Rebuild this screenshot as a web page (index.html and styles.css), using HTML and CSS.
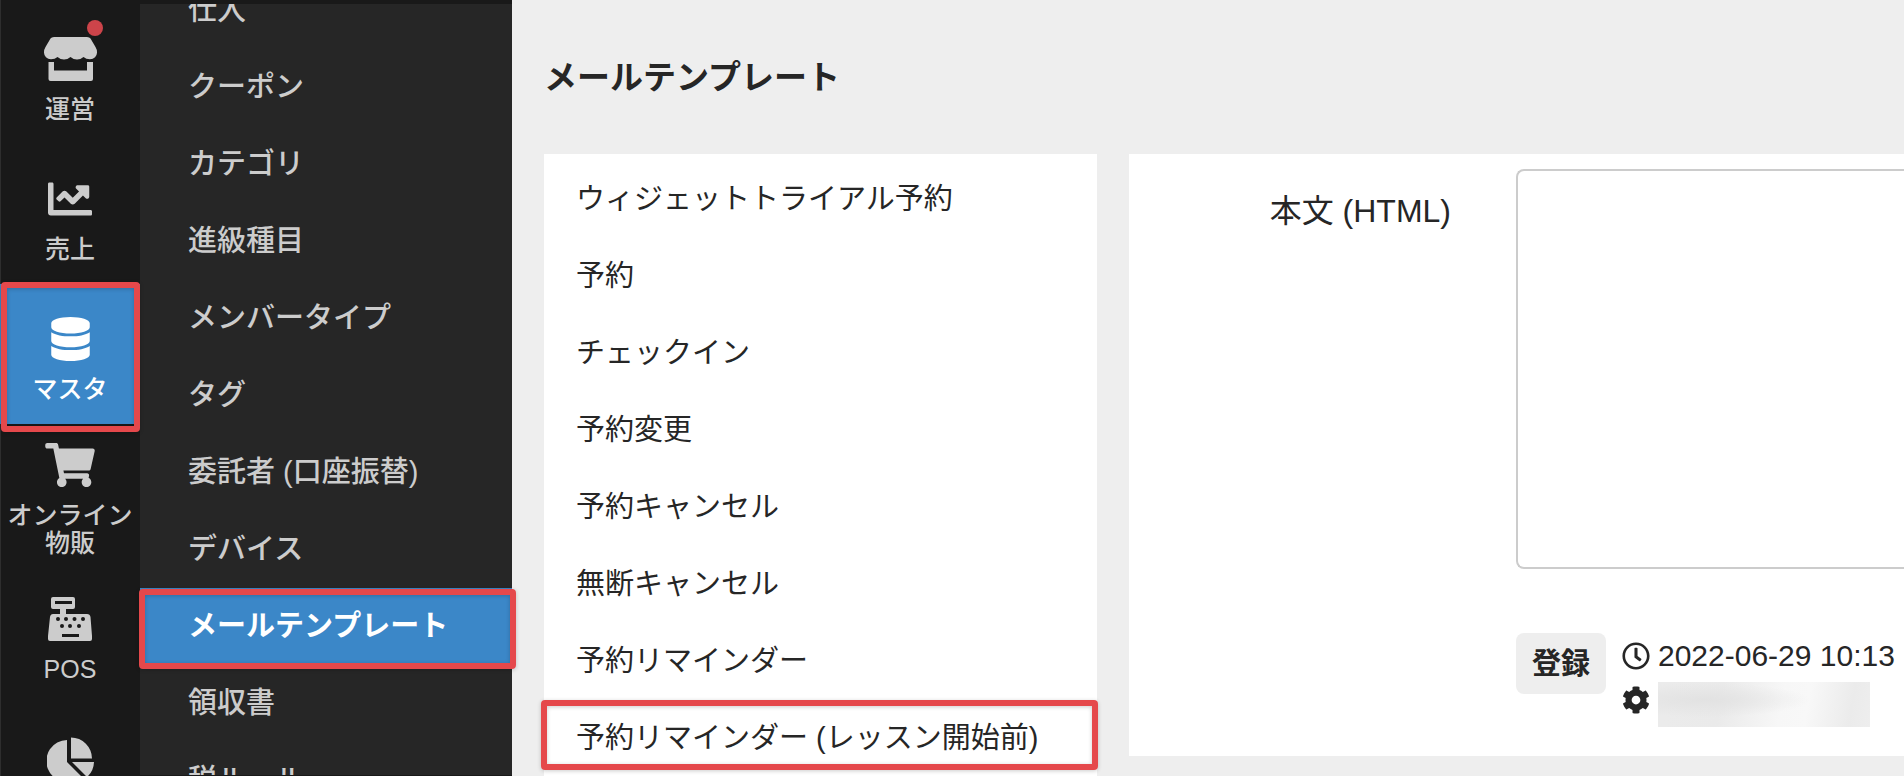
FILE: index.html
```html
<!DOCTYPE html>
<html lang="ja">
<head>
    <meta charset="UTF-8">
    <meta name="viewport" content="width=device-width, initial-scale=1.0">
    <title>メールテンプレート</title>
    <link rel="stylesheet" href="styles.css">
</head>
<body>
    <nav class="rail">
        <a href="#" class="rail-item">
            <span class="rail-icon">
                <svg width="53" height="44" viewBox="0 0 53 44"><path d="M10 0Q7.500 0 6.500 1.500L1.500 10Q0 12.500 0 15A7 7 0 0 0 7 22.300Q11 22.300 13.500 20Q16.500 22.500 20 22.500Q23.500 22.500 26.500 20Q29.500 22.500 33 22.500Q36.500 22.500 39.500 20Q42 22.300 46 22.300A7 7 0 0 0 53 15Q53 12.500 51.500 10L46.500 1.500Q45.500 0 43 0ZM4.500 25h5.500v8.500h33v-8.500h6v17q0 2-2 2h-40.500q-2 0-2-2z"/></svg>
                <span class="badge"></span>
            </span>
            <span>運営</span>
        </a>
        <a href="#" class="rail-item">
            <svg width="44" height="44" viewBox="0 0 512 512"><path d="M496 384H64V80c0-8.840-7.160-16-16-16H16C7.160 64 0 71.160 0 80v336c0 17.670 14.330 32 32 32h464c8.840 0 16-7.160 16-16v-32c0-8.840-7.160-16-16-16zM464 96H345.940c-21.380 0-32.090 25.850-16.970 40.970l32.400 32.400L288 242.750l-73.370-73.370c-12.500-12.500-32.760-12.500-45.250 0l-68.690 68.690c-6.250 6.250-6.250 16.380 0 22.630l22.620 22.620c6.250 6.250 16.380 6.250 22.630 0L192 237.250l73.370 73.370c12.500 12.500 32.760 12.500 45.250 0l96-96 32.400 32.400c15.120 15.120 40.970 4.410 40.970-16.970V112c0-8.840-7.150-16-15.990-16z"/></svg>
            <span>売上</span>
        </a>
        <a href="#" class="rail-item active">
            <svg width="39" height="44" viewBox="0 0 448 512"><path d="M448 73v46c0 40-100 73-224 73S0 159 0 119V73C0 33 100 0 224 0s224 33 224 73zM448 176v103c0 40-100 73-224 73S0 319 0 279V176c48 33 136 49 224 49s176-16 224-49zm0 160v103c0 40-100 73-224 73S0 479 0 439V336c48 33 136 49 224 49s176-16 224-49z"/></svg>
            <span>マスタ</span>
            <span class="marker marker-rail"></span>
        </a>
        <a href="#" class="rail-item">
            <svg width="50" height="44" viewBox="0 0 576 512"><path d="M528.120 301.319l47.273-208C578.806 78.301 567.391 64 551.990 64H159.208l-9.166-44.810C147.758 8.021 137.930 0 126.529 0H24C10.745 0 0 10.745 0 24v16c0 13.255 10.745 24 24 24h69.883l70.248 343.435C147.325 417.100 136 435.222 136 456c0 30.928 25.072 56 56 56s56-25.072 56-56c0-15.674-6.447-29.835-16.824-40h209.647C430.447 426.165 424 440.326 424 456c0 30.928 25.072 56 56 56s56-25.072 56-56c0-22.172-12.888-41.332-31.579-50.405l5.517-24.276c3.413-15.018-8.002-29.319-23.403-29.319H218.117l-6.545-32h293.145c11.206 0 20.920-7.754 23.403-18.681z"/></svg>
            <span>オンライン<br>物販</span>
        </a>
        <a href="#" class="rail-item">
            <svg width="44" height="44" viewBox="0 0 44 44"><path fill-rule="evenodd" d="M5 0h20q2 0 2 2v8q0 2-2 2h-7v5h21q3 0 3.500 3l1.500 19v3q0 2-2 2H2q-2 0-2-2v-3l2-19q.5-3 3-3h7v-5H5q-2 0-2-2V2q0-2 2-2zM7 4v3h17V4zM14 37v3h17v-3z"/><g class="keys"><circle cx="10" cy="22" r="2"/><circle cx="18" cy="22" r="2"/><circle cx="26.500" cy="22" r="2"/><circle cx="35" cy="22" r="2"/><circle cx="14" cy="29" r="2"/><circle cx="22" cy="29" r="2"/><circle cx="31" cy="29" r="2"/></g></svg>
            <span>POS</span>
        </a>
        <a href="#" class="rail-item icon-only" aria-label="集計">
            <svg width="47" height="47" viewBox="0 0 47 47"><path d="M24 .500A21 21 0 0 1 45 21.500H24zM20 3v22l14.500 14.500A21 21 0 1 1 20 3zM25 25h22a21 21 0 0 1-7 15z"/></svg>
        </a>
    </nav>

    <nav class="submenu">
        <ul class="menu-list">
            <li><a href="#">仕入</a></li>
            <li><a href="#">クーポン</a></li>
            <li><a href="#">カテゴリ</a></li>
            <li><a href="#">進級種目</a></li>
            <li><a href="#">メンバータイプ</a></li>
            <li><a href="#">タグ</a></li>
            <li><a href="#">委託者 (口座振替)</a></li>
            <li><a href="#">デバイス</a></li>
            <li><a href="#" class="active">メールテンプレート</a><span class="marker marker-menu"></span></li>
            <li><a href="#">領収書</a></li>
            <li><a href="#">税ルール</a></li>
        </ul>
    </nav>

    <main class="content">
        <h1>メールテンプレート</h1>
        <div class="columns">
            <ul class="template-list">
                <li><a href="#">ウィジェットトライアル予約</a></li>
                <li><a href="#">予約</a></li>
                <li><a href="#">チェックイン</a></li>
                <li><a href="#">予約変更</a></li>
                <li><a href="#">予約キャンセル</a></li>
                <li><a href="#">無断キャンセル</a></li>
                <li><a href="#">予約リマインダー</a></li>
                <li><a href="#">予約リマインダー (レッスン開始前)</a><span class="marker marker-template"></span></li>
            </ul>

            <form class="editor">
                <label for="bodyHtml">本文 (HTML)</label>
                <textarea id="bodyHtml"></textarea>
                <div class="actions">
                    <button type="button">登録</button>
                    <div class="history">
                        <div class="history-row">
                            <svg width="28" height="28" viewBox="0 0 512 512"><path d="M256 8C119 8 8 119 8 256s111 248 248 248 248-111 248-248S393 8 256 8zm0 448c-110.500 0-200-89.500-200-200S145.500 56 256 56s200 89.500 200 200-89.500 200-200 200zm61.800-104.400l-84.900-61.700c-3.100-2.300-4.900-5.900-4.900-9.700V116c0-6.600 5.400-12 12-12h32c6.600 0 12 5.400 12 12v141.700l66.800 48.600c5.400 3.900 6.500 11.400 2.600 16.800L334.600 349c-3.900 5.300-11.400 6.500-16.800 2.600z"/></svg>
                            <time datetime="2022-06-29T10:13">2022-06-29 10:13</time>
                        </div>
                        <div class="history-row user-row">
                            <svg width="28" height="28" viewBox="0 0 512 512"><path d="M487.400 315.700l-42.600-24.600c4.300-23.200 4.300-47 0-70.200l42.600-24.600c4.900-2.800 7.100-8.600 5.500-14-11.100-35.600-30-67.800-54.700-94.600-3.800-4.100-10-5.100-14.800-2.300L380.800 110c-17.900-15.400-38.500-27.300-60.800-35.100V25.800c0-5.600-3.900-10.500-9.400-11.700-36.700-8.200-74.300-7.800-109.200 0-5.500 1.200-9.400 6.100-9.400 11.700V75c-22.200 7.900-42.800 19.800-60.800 35.100L88.700 85.500c-4.900-2.800-11-1.900-14.800 2.300-24.700 26.700-43.600 58.900-54.700 94.600-1.700 5.400.6 11.200 5.500 14L67.300 221c-4.300 23.200-4.300 47 0 70.200l-42.600 24.600c-4.900 2.800-7.100 8.600-5.500 14 11.100 35.600 30 67.800 54.700 94.600 3.800 4.100 10 5.100 14.800 2.300l42.600-24.600c17.900 15.400 38.500 27.300 60.800 35.100v49.200c0 5.600 3.900 10.500 9.400 11.700 36.700 8.200 74.300 7.800 109.200 0 5.500-1.200 9.400-6.100 9.400-11.700v-49.200c22.200-7.900 42.800-19.800 60.800-35.100l42.600 24.600c4.900 2.800 11 1.900 14.800-2.300 24.700-26.700 43.600-58.900 54.700-94.600 1.500-5.500-.7-11.300-5.600-14.100zM256 336c-44.100 0-80-35.900-80-80s35.900-80 80-80 80 35.900 80 80-35.900 80-80 80z"/></svg>
                            <span class="masked-name"></span>
                        </div>
                    </div>
                </div>
            </form>
        </div>
    </main>
</body>
</html>
```
FILE: styles.css
```css
* {
    box-sizing: border-box;
}

body {
    display: flex;
    height: 100vh;
    margin: 0;
    overflow: hidden;
    background-color: #eee;
    color: #262626;
    font-family: "Liberation Sans", "Noto Sans CJK JP", sans-serif;
    font-size: 29px;
}

a {
    color: inherit;
    text-decoration: none;
}

ul {
    list-style: none;
    margin: 0;
    padding: 0;
}

svg {
    display: block;
    flex: none;
    fill: currentColor;
}

/* Left icon rail */
.rail {
    flex: none;
    width: 140px;
    padding-top: 4px;
    background-color: #191919;
    box-shadow: inset 1px 0 #2e2e2e;
    color: #ccc;
}

.rail-item {
    position: relative;
    display: flex;
    flex-direction: column;
    align-items: center;
    justify-content: center;
    gap: 14px;
    height: 140px;
    padding-top: 12px;
    font-size: 25px;
    font-weight: 500;
    line-height: 28px;
    text-align: center;
    white-space: nowrap;
}

.rail-item.active {
    background-color: #3b87c8;
    color: #fff;
}

.rail-item.icon-only {
    justify-content: flex-start;
    padding-top: 33px;
}

.rail-icon {
    position: relative;
}

.badge {
    position: absolute;
    top: -17px;
    right: -6px;
    width: 16px;
    height: 16px;
    border-radius: 50%;
    background-color: #cd444a;
}

.keys {
    fill: #191919;
}

/* Second level menu */
.submenu {
    flex: none;
    width: 372px;
    height: 100vh;
    border-top: 4px solid #191919;
    border-bottom: 1px solid #191919;
    background-color: #262626;
    color: #ccc;
    font-weight: 500;
}

/* Clip the scrolled list, but let the frame stick out sideways */
.menu-list {
    height: 100%;
    padding-top: 1px;
    clip-path: inset(0 -8px);
}

.menu-list li:first-child {
    margin-top: -33px;
}

.menu-list li,
.template-list li {
    position: relative;
    height: 77px;
    line-height: 77px;
}

.menu-list a {
    display: block;
    height: 77px;
    padding-left: 48px;
}

.menu-list .active {
    background-color: #3b87c8;
    color: #fff;
    font-weight: bold;
}

/* Main area */
.content {
    flex: 1;
    min-width: 0;
    padding-left: 32px;
}

h1 {
    margin: 0;
    padding: 54px 0 52px;
    font-size: 33px;
    line-height: 48px;
}

.columns {
    display: flex;
    align-items: flex-start;
    gap: 32px;
}

.template-list {
    flex: none;
    width: 553px;
    padding-top: 7px;
    background-color: #fff;
}

.template-list a {
    display: block;
    height: 77px;
    padding-left: 32px;
}

.editor {
    flex: 1;
    min-width: 0;
    display: grid;
    grid-template-columns: 322px 1fr;
    column-gap: 65px;
    padding: 15px 0 29px;
    background-color: #fff;
}

.editor label {
    padding-top: 18px;
    font-size: 32px;
    line-height: 48px;
    text-align: right;
}

.editor textarea {
    height: 400px;
    padding: 16px;
    border: 2px solid #ccc;
    border-right: 0;
    border-radius: 8px 0 0 8px;
    background-color: #fff;
    font: inherit;
    resize: none;
}

.actions {
    grid-column: 2;
    display: flex;
    align-items: flex-start;
    gap: 16px;
    margin-top: 64px;
}

.actions button {
    width: 90px;
    height: 61px;
    padding: 0 0 6px;
    border: 0;
    border-radius: 8px;
    background-color: #eee;
    color: inherit;
    font: inherit;
    font-weight: bold;
}

.history {
    display: grid;
    gap: 9px;
    padding-top: 6px;
}

.history-row {
    display: flex;
    align-items: center;
    gap: 8px;
    white-space: nowrap;
}

.user-row {
    align-items: flex-start;
}

.user-row svg {
    margin-top: 4px;
}

.history-row time {
    font-size: 30px;
    line-height: 34px;
}

.masked-name {
    width: 212px;
    height: 45px;
    background: radial-gradient(ellipse at 22% 40%, #e2e2e2, rgba(226, 226, 226, 0) 45%), linear-gradient(100deg, #ebebeb 5%, #eaeaea 30%, #f7f7f7 58%, #f8f8f8 70%, #ebebeb 90%, #eee);
}

/* Red frames around the highlighted entries */
.marker {
    position: absolute;
    z-index: 1;
    border: 6px solid #e5484b;
    border-radius: 4px;
    box-shadow: 0 1px 4px rgba(0, 0, 0, 0.2), inset 0 1px 4px rgba(0, 0, 0, 0.2);
    pointer-events: none;
}

.marker-rail {
    top: -2px;
    right: 0;
    bottom: -8px;
    left: 1px;
}

.marker-menu {
    top: 1px;
    right: -4px;
    bottom: -4px;
    left: -1px;
}

.marker-template {
    top: 0;
    right: -1px;
    bottom: 7px;
    left: -3px;
}
```
